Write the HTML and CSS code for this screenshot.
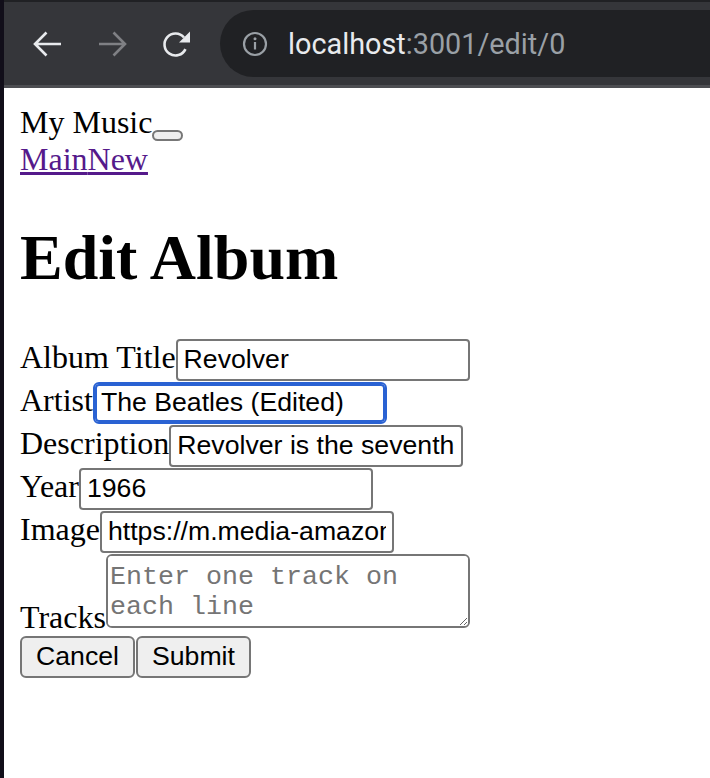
FILE: index.html
```html
<!DOCTYPE html>
<html lang="en">
<head>
<meta charset="utf-8">
<title>My Music</title>
<link rel="stylesheet" href="styles.css">
</head>
<body>
<header class="toolbar">
  <svg class="nav-icon" viewBox="0 0 40 40" aria-label="Back">
    <path d="M33 20H8M18.5 8.5L7 20l11.5 11.5" fill="none" stroke="#e8eaed" stroke-width="2.6"/>
  </svg>
  <svg class="nav-icon" viewBox="0 0 40 40" aria-label="Forward">
    <path d="M7 20h25M21.5 8.5L33 20 21.5 31.5" fill="none" stroke="#7f8084" stroke-width="2.6"/>
  </svg>
  <svg class="nav-icon" viewBox="0 0 40 40" aria-label="Reload">
    <path d="M29.47 25.15A11 11 0 1 1 27.99 13.5" fill="none" stroke="#e8eaed" stroke-width="2.6"/>
    <path d="M34 7.5V18.5H23Z" fill="#e8eaed"/>
  </svg>
  <div class="omnibox">
    <svg class="info-icon" viewBox="0 0 28 28" aria-hidden="true">
      <circle cx="14" cy="14" r="11" fill="none" stroke="#9aa0a6" stroke-width="2.2"/>
      <rect x="12.9" y="12" width="2.2" height="7.5" fill="#9aa0a6"/>
      <circle cx="14" cy="8.7" r="1.5" fill="#9aa0a6"/>
    </svg>
    <span class="url"><span class="url-host">localhost</span>:3001/edit/0</span>
  </div>
</header>
<main class="page">
  <div class="brand">My Music<button class="menu-btn" type="button"></button></div>
  <nav class="links"><a class="nav-link" href="#">Main</a><a class="nav-link" href="#">New</a></nav>
  <h1 class="title">Edit Album</h1>
  <form class="album-form">
    <div class="field"><label>Album Title<input class="field-input" type="text" value="Revolver"></label></div>
    <div class="field"><label>Artist<input class="field-input is-focused" type="text" value="The Beatles (Edited)"></label></div>
    <div class="field"><label>Description<input class="field-input" type="text" value="Revolver is the seventh studio album by the English rock band the Beatles."></label></div>
    <div class="field"><label>Year<input class="field-input" type="text" value="1966"></label></div>
    <div class="field"><label>Image<input class="field-input" type="text" value="https://m.media-amazon.com/images/revolver.jpg"></label></div>
    <div class="field"><label>Tracks<textarea class="field-textarea" placeholder="Enter one track on each line"></textarea></label></div>
    <div class="actions"><button class="btn" type="button">Cancel</button><button class="btn" type="submit">Submit</button></div>
  </form>
</main>
</body>
</html>
```

FILE: styles.css
```css
html {
  background: #ffffff;
}

body {
  margin: 0;
  min-height: 100vh;
  box-sizing: border-box;
  border-left: 4px solid #110e19;
  font-family: "Liberation Serif", "Times New Roman", serif;
  font-size: 32px;
  color: #000000;
}

.toolbar {
  display: flex;
  align-items: center;
  gap: 24px;
  height: 83px;
  padding-left: 24px;
  background: #35363a;
  border-top: 2px solid #202124;
  border-bottom: 3px solid #4d4e52;
  overflow: hidden;
}

.nav-icon {
  flex: none;
  width: 40px;
  height: 40px;
}

.omnibox {
  flex: 1;
  display: flex;
  align-items: center;
  gap: 19px;
  height: 67px;
  padding-left: 21px;
  background: #202124;
  border-radius: 34px 0 0 34px;
}

.info-icon {
  flex: none;
  width: 28px;
  height: 28px;
}

.url {
  font-family: Roboto, "Noto Sans", sans-serif;
  font-size: 28.8px;
  color: #9aa0a6;
  white-space: nowrap;
}

.url-host {
  color: #e8eaed;
}

.page {
  padding: 16px;
}

.menu-btn {
  width: 31px;
  height: 11px;
  box-sizing: border-box;
  padding: 0;
  margin: 0;
  border: 2px solid #777777;
  border-radius: 6px;
  background: #efefef;
  vertical-align: -6px;
}

.nav-link {
  color: #551a8b;
  text-decoration: underline;
  text-decoration-thickness: 3px;
}

.title {
  font-size: 64px;
  font-weight: bold;
  margin: 42.88px 0;
}

.album-form {
  margin: 0;
  padding-top: 1px;
}

.field-input {
  font-family: "Liberation Sans", Arial, sans-serif;
  font-size: 26.67px;
  width: 294px;
  height: 42px;
  box-sizing: border-box;
  margin: 0 0 1px;
  padding: 0 6px;
  border: 2px solid #767676;
  border-radius: 4px;
  background: #ffffff;
  color: #000000;
  outline: none;
}

.is-focused {
  border-color: #2a62d3;
  border-radius: 6px;
  box-shadow: inset 0 0 0 2px #2a62d3;
}

.field-textarea {
  font-family: "Liberation Mono", "Courier New", monospace;
  font-size: 26.67px;
  width: 364px;
  height: 74px;
  box-sizing: border-box;
  margin: 0;
  padding: 6px 2px;
  border: 2px solid #767676;
  border-radius: 6px;
  background: #ffffff;
  color: #000000;
  vertical-align: baseline;
}

.field-textarea::placeholder {
  color: #757575;
}

.btn {
  font-family: "Liberation Sans", Arial, sans-serif;
  font-size: 26.67px;
  height: 42px;
  box-sizing: border-box;
  margin: 0;
  padding: 0 14px;
  border: 2px solid #767676;
  border-radius: 6px;
  background: #efefef;
  color: #000000;
}

.btn + .btn {
  margin-left: 1px;
}
```
